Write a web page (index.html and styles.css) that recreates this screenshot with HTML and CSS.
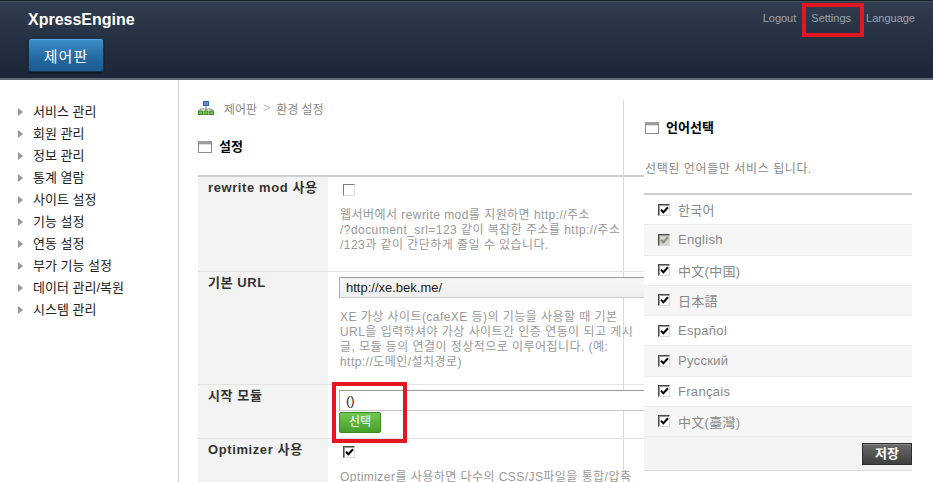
FILE: index.html
```html
<html>
<head>
  <meta charset="UTF-8">
  <title>XpressEngine 제어판 - 환경 설정</title>
  <link rel="stylesheet" href="styles.css">
</head>
<body>
  <header class="topbar">
    <div class="brand-col">
      <div class="brand">XpressEngine</div>
      <a class="admin-btn">제어판</a>
    </div>
    <nav class="gnb">
      <a>Logout</a>
      <a>Settings</a>
      <a>Language</a>
    </nav>
  </header>

  <div class="layout">
    <nav class="lnb">
      <ul>
        <li>서비스 관리</li>
        <li>회원 관리</li>
        <li>정보 관리</li>
        <li>통계 열람</li>
        <li>사이트 설정</li>
        <li>기능 설정</li>
        <li>연동 설정</li>
        <li>부가 기능 설정</li>
        <li>데이터 관리/복원</li>
        <li>시스템 관리</li>
      </ul>
    </nav>

    <main class="content">
      <div class="breadcrumb">
        <svg class="sitemap" width="16" height="14" viewBox="0 0 16 14">
          <rect x="5.5" y="0.5" width="5" height="4" fill="#5b8fd8" stroke="#2f5fa8"/>
          <path d="M8 5v3M2 8h12M2 8v2M8 8v2M14 8v2" stroke="#888" fill="none"/>
          <rect x="0.5" y="10" width="4" height="3.5" fill="#6cbf4a" stroke="#3d8a24"/>
          <rect x="6" y="10" width="4" height="3.5" fill="#6cbf4a" stroke="#3d8a24"/>
          <rect x="11.5" y="10" width="4" height="3.5" fill="#6cbf4a" stroke="#3d8a24"/>
        </svg>
        <span>제어판</span><span class="sep">&gt;</span><span>환경 설정</span>
      </div>

      <h3 class="box-title"><span class="win-icon"></span>설정</h3>

      <table class="setup">
        <tr>
          <th>rewrite mod 사용</th>
          <td>
            <span class="chk off"></span>
            <p class="desc first">웹서버에서 rewrite mod를 지원하면 http://주소<br>/?document_srl=123 같이 복잡한 주소를 http://주소<br>/123과 같이 간단하게 줄일 수 있습니다.</p>
          </td>
        </tr>
        <tr>
          <th>기본 URL</th>
          <td>
            <div class="input gray">http://xe.bek.me/</div>
            <p class="desc">XE 가상 사이트(cafeXE 등)의 기능을 사용할 때 기본<br>URL을 입력하셔야 가상 사이트간 인증 연동이 되고 게시<br>글, 모듈 등의 연결이 정상적으로 이루어집니다. (예:<br>http://도메인/설치경로)</p>
          </td>
        </tr>
        <tr class="row-module">
          <th>시작 모듈</th>
          <td>
            <div class="input">()</div>
            <a class="btn-green">선택</a>
          </td>
        </tr>
        <tr>
          <th>Optimizer 사용</th>
          <td>
            <span class="chk on"><svg width="9" height="8" viewBox="0 0 9 8"><path d="M1 3.8 3.4 6.2 8 1.2" stroke="#000" stroke-width="2" fill="none"/></svg></span>
            <p class="desc">Optimizer를 사용하면 다수의 CSS/JS파일을 통합/압축</p>
          </td>
        </tr>
      </table>
    </main>

    <aside class="lang">
      <h3 class="box-title"><span class="win-icon"></span>언어선택</h3>
      <p class="lang-desc">선택된 언어들만 서비스 됩니다.</p>
      <ul class="lang-list">
        <li><span class="chk on"><svg width="9" height="8" viewBox="0 0 9 8"><path d="M1 3.8 3.4 6.2 8 1.2" stroke="#000" stroke-width="2" fill="none"/></svg></span>한국어</li>
        <li class="alt"><span class="chk on disabled"><svg width="9" height="8" viewBox="0 0 9 8"><path d="M1 3.8 3.4 6.2 8 1.2" stroke="#888" stroke-width="2" fill="none"/></svg></span>English</li>
        <li><span class="chk on"><svg width="9" height="8" viewBox="0 0 9 8"><path d="M1 3.8 3.4 6.2 8 1.2" stroke="#000" stroke-width="2" fill="none"/></svg></span>中文(中国)</li>
        <li class="alt"><span class="chk on"><svg width="9" height="8" viewBox="0 0 9 8"><path d="M1 3.8 3.4 6.2 8 1.2" stroke="#000" stroke-width="2" fill="none"/></svg></span>日本語</li>
        <li><span class="chk on"><svg width="9" height="8" viewBox="0 0 9 8"><path d="M1 3.8 3.4 6.2 8 1.2" stroke="#000" stroke-width="2" fill="none"/></svg></span>Español</li>
        <li class="alt"><span class="chk on"><svg width="9" height="8" viewBox="0 0 9 8"><path d="M1 3.8 3.4 6.2 8 1.2" stroke="#000" stroke-width="2" fill="none"/></svg></span>Русский</li>
        <li><span class="chk on"><svg width="9" height="8" viewBox="0 0 9 8"><path d="M1 3.8 3.4 6.2 8 1.2" stroke="#000" stroke-width="2" fill="none"/></svg></span>Français</li>
        <li class="alt"><span class="chk on"><svg width="9" height="8" viewBox="0 0 9 8"><path d="M1 3.8 3.4 6.2 8 1.2" stroke="#000" stroke-width="2" fill="none"/></svg></span>中文(臺灣)</li>
      </ul>
      <div class="lang-foot">
        <a class="btn-save">저장</a>
      </div>
    </aside>
  </div>

  <div class="mark mark-settings"></div>
  <div class="mark mark-module"></div>
</body>
</html>
```

FILE: styles.css
```css
body {
  margin: 0;
  padding: 0;
  background: #fff;
  font-family: "Liberation Sans", "Noto Sans CJK KR", sans-serif;
  font-size: 12px;
  color: #333;
  position: relative;
  height: 482px;
  overflow: hidden;
}
a { text-decoration: none; cursor: pointer; }
ul { list-style: none; margin: 0; padding: 0; }

/* top bar */
.topbar {
  height: 77px;
  display: flex;
  justify-content: space-between;
  background: linear-gradient(#2f3d4e, #1b2637);
  border-top: 1px solid #141c26;
  box-shadow: inset 0 1px 0 #46535f;
  border-bottom: 2px solid #5e6b77;
}
.brand-col {
  padding: 9px 0 0 28px;
}
.brand {
  color: #fff;
  font-weight: bold;
  font-size: 16px;
  line-height: 20px;
}
.admin-btn {
  display: flex;
  align-items: center;
  justify-content: center;
  margin-top: 8px;
  width: 74px;
  height: 32px;
  color: #fff;
  font-size: 15px;
  font-family: "Noto Sans CJK KR", sans-serif;
  letter-spacing: 1px;
  background: linear-gradient(#3f8fc9, #2369a2 60%, #1d5a8f);
  border: 1px solid #13324f;
  border-radius: 3px;
  box-shadow: inset 0 1px 0 #5ba6dc, 0 1px 2px #0c141c;
}
.gnb {
  display: flex;
  gap: 15px;
  padding: 10px 18px 0 0;
  font-size: 11px;
  line-height: 14px;
}
.gnb a { color: #9aa4af; }

/* layout */
.layout {
  display: flex;
  align-items: flex-start;
}
.lnb {
  width: 178px;
  flex: none;
  height: 410px;
  border-right: 1px solid #cfcfcf;
}
.lnb ul { padding: 21px 0 0 17px; }
.lnb li {
  position: relative;
  padding-left: 16px;
  line-height: 22px;
  font-size: 13px;
  color: #222;
}
.lnb li::before {
  content: "";
  position: absolute;
  left: 1px;
  top: 7px;
  border-left: 5px solid #999;
  border-top: 4px solid transparent;
  border-bottom: 4px solid transparent;
}

/* content */
.content {
  width: 425px;
  flex: none;
  margin-top: 20px;
  padding-left: 19px;
  height: 390px;
  border-right: 1px solid #dadada;
}
.breadcrumb {
  display: flex;
  align-items: center;
  gap: 6px;
  height: 16px;
  color: #888;
  font-size: 12px;
}
.breadcrumb .sitemap { margin-right: 4px; }
.breadcrumb .sep { color: #bbb; }

.box-title {
  display: flex;
  align-items: center;
  gap: 7px;
  margin: 23px 0 20px;
  font-size: 13px;
  line-height: 16px;
  color: #000;
}
.win-icon {
  width: 12px;
  height: 8px;
  border: 1px solid #8a8a8a;
  border-top: 3px solid #9c9c9c;
  background: #fff;
  box-shadow: inset 0 1px 0 #ddd;
}

.setup {
  width: 446px;
  table-layout: fixed;
  border-collapse: collapse;
  border-top: 2px solid #cfcfcf;
}
.setup th {
  width: 110px;
  padding: 3px 10px 0;
  text-align: left;
  vertical-align: top;
  background: #f3f3f3;
  font-size: 13px;
  line-height: 16px;
  color: #333;
  letter-spacing: 0.6px;
  white-space: nowrap;
  border-bottom: 1px solid #e2e2e2;
}
.setup td {
  padding: 5px 0 14px 11px;
  vertical-align: top;
  border-bottom: 1px solid #e2e2e2;
}
.setup .row-module td { padding-bottom: 5px; }
.desc {
  margin: 12px 0 0 1px;
  color: #999;
  font-size: 12px;
  line-height: 15px;
  letter-spacing: 0.45px;
  white-space: nowrap;
}
.desc.first { margin-bottom: 4px; }
.input {
  height: 19px;
  line-height: 19px;
  padding-left: 6px;
  width: 298px;
  border: 1px solid #c9c9c9;
  border-top-color: #9a9a9a;
  border-left-color: #b0b0b0;
  background: #fff;
  color: #222;
  font-size: 13px;
}
.input.gray {
  background: linear-gradient(#f6f6f6, #efefef);
}
.btn-green {
  display: inline-block;
  margin-top: 1px;
  width: 40px;
  height: 19px;
  line-height: 19px;
  text-align: center;
  color: #fff;
  font-size: 12px;
  background: linear-gradient(#74c850, #44a02a);
  border: 1px solid #3c8c24;
  border-radius: 2px;
}

/* checkboxes */
.chk {
  display: inline-flex;
  align-items: center;
  justify-content: center;
  box-sizing: border-box;
  width: 12px;
  height: 12px;
  margin: 2px 0 0 4px;
  background: #fff;
  border: 1px solid;
  border-color: #4a4a4a #d8d8d8 #d8d8d8 #4a4a4a;
  box-shadow: inset 1px 1px 0 #9a9a9a;
  vertical-align: top;
}
.chk.off {
  border-color: #7a7a7a #e0e0e0 #e0e0e0 #7a7a7a;
  box-shadow: none;
}
.chk.disabled { background: #d6d3ce; }

/* language panel */
.lang {
  width: 268px;
  flex: none;
  margin: 20px 0 0 20px;
  background: #fff;
}
.lang .box-title {
  margin: 20px 0 0 1px;
  gap: 7px;
}
.lang-desc {
  margin: 25px 0 0 1px;
  color: #888;
  font-size: 12px;
  line-height: 16px;
  letter-spacing: 0.6px;
}
.lang-list {
  margin-top: 16px;
  border-top: 2px solid #cfcfcf;
}
.lang-list li {
  display: flex;
  align-items: center;
  height: 29.25px;
  padding-left: 10px;
  border-bottom: 1px solid #ececec;
  color: #888;
  font-size: 13px;
  letter-spacing: 0.3px;
}
.lang-list li.alt { background: #f6f6f6; }
.lang-list .chk { margin: 0 8px 0 4px; }
.lang-foot {
  display: flex;
  justify-content: flex-end;
  height: 34px;
  padding-top: 6px;
  box-sizing: border-box;
  background: #f4f4f4;
  border-bottom: 1px solid #dcdcdc;
}
.btn-save {
  width: 48px;
  height: 20px;
  line-height: 20px;
  text-align: center;
  color: #fff;
  font-weight: bold;
  font-size: 13px;
  background: linear-gradient(#6a6a6a, #3e3e3e);
  border: 1px solid #2c2c2c;
  box-shadow: inset 0 1px 0 #888;
}

/* annotation marks */
.mark {
  position: absolute;
  border: 4px solid #e2171f;
}
.mark-settings {
  left: 802px;
  top: 3px;
  width: 54px;
  height: 26px;
}
.mark-module {
  left: 332px;
  top: 382px;
  width: 67px;
  height: 53px;
}
```
